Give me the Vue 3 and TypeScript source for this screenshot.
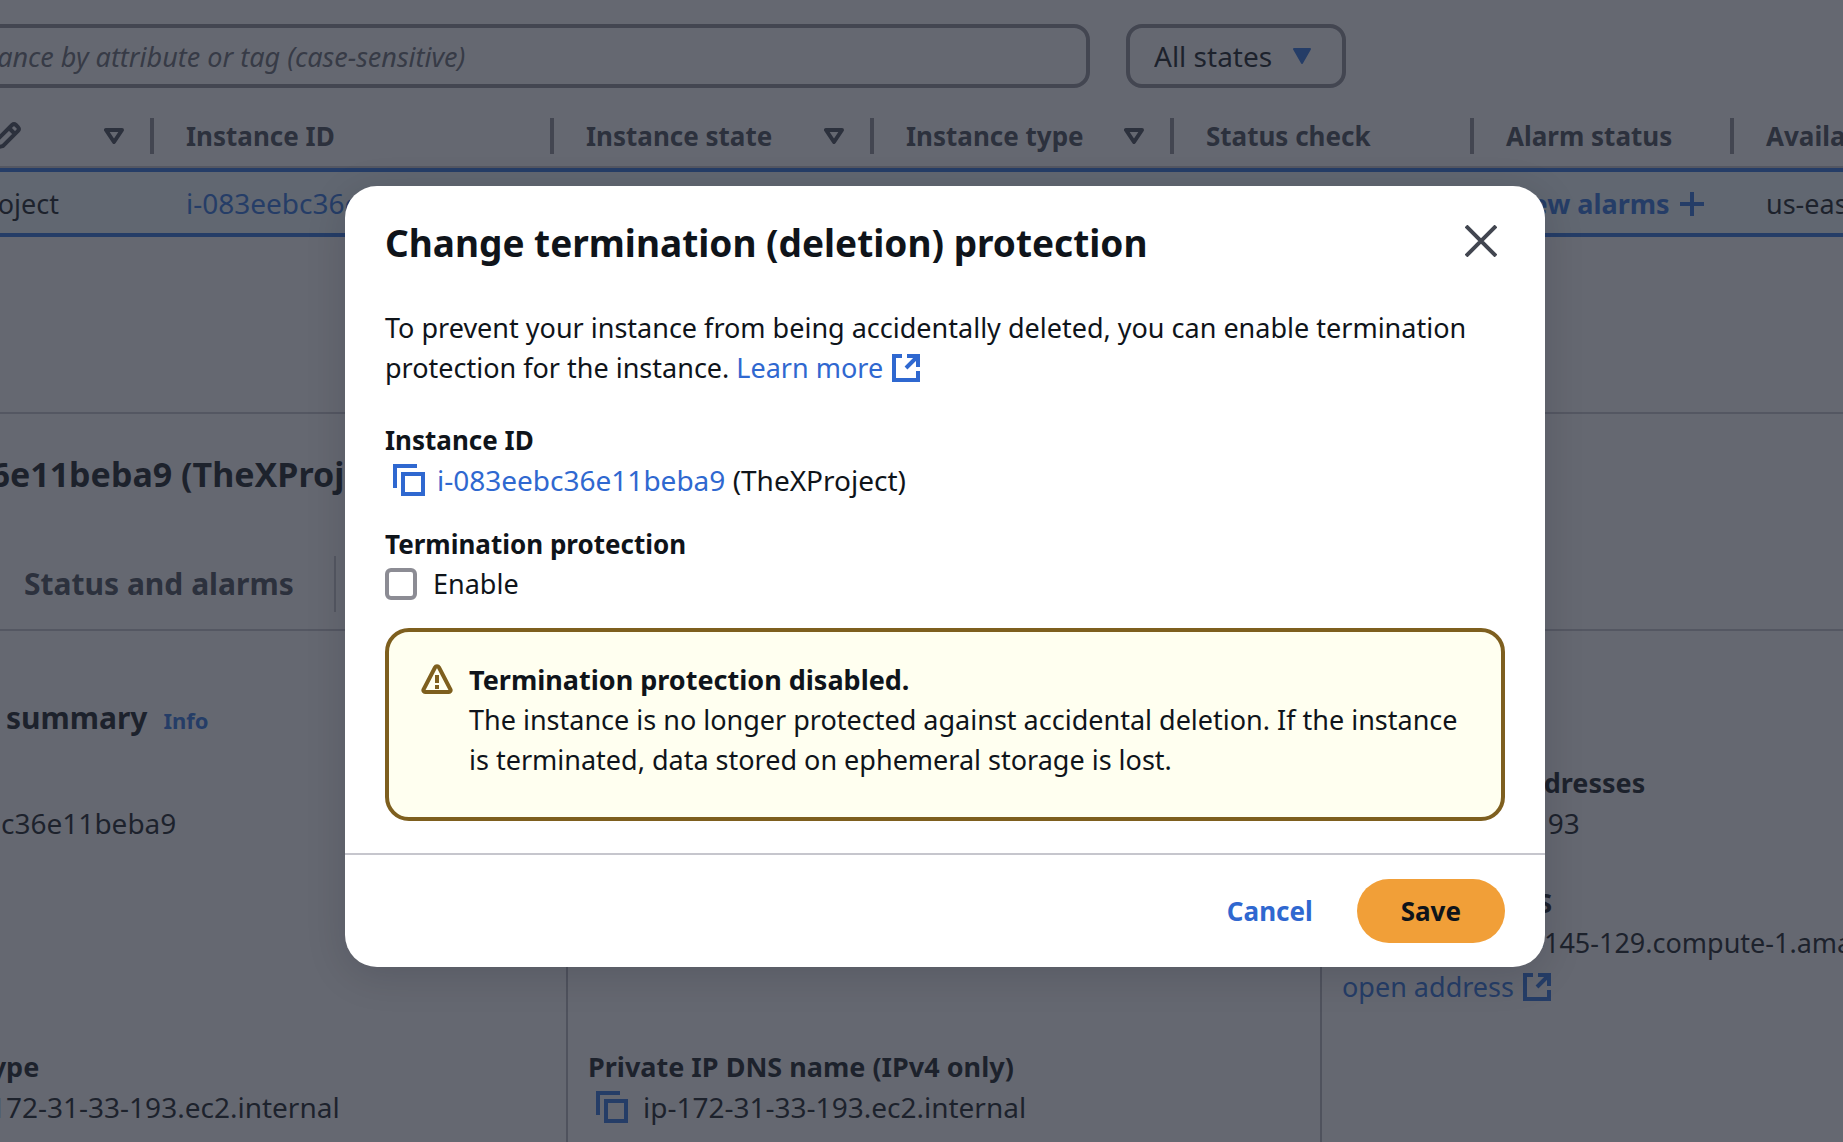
<script setup lang="ts">
import { ref } from 'vue'

interface Column {
  label: string
  width: string
  sortable?: boolean
  editable?: boolean
}

const columns: Column[] = [
  { label: 'Name', width: '354px', sortable: true, editable: true },
  { label: 'Instance ID', width: '400px' },
  { label: 'Instance state', width: '320px', sortable: true },
  { label: 'Instance type', width: '300px', sortable: true },
  { label: 'Status check', width: '300px' },
  { label: 'Alarm status', width: '260px' },
  { label: 'Availability Zone', width: 'auto' },
]

const stateFilter = ref('All states')
const query = ref('')
const protectionEnabled = ref(false)
</script>

<template>
  <div class="viewport">
    <div class="console">
      <div class="filters">
        <input
          v-model="query"
          class="search"
          type="text"
          aria-label="Find instances"
          placeholder="Find Instance by attribute or tag (case-sensitive)"
        />
        <div class="state-filter">
          <select v-model="stateFilter" aria-label="Instance state filter">
            <option>All states</option>
            <option>Running</option>
          </select>
          <svg class="caret" viewBox="0 0 20 16" aria-hidden="true">
            <path d="M2 1h16L10 15z" fill="currentColor" stroke="currentColor" stroke-width="2" stroke-linejoin="round" />
          </svg>
        </div>
      </div>

      <table class="instances">
        <colgroup>
          <col v-for="c in columns" :key="c.label" :style="{ width: c.width }" />
        </colgroup>
        <thead>
          <tr>
            <th v-for="c in columns" :key="c.label" scope="col">
              <div class="head">
                <span>{{ c.label }}</span>
                <svg v-if="c.editable" class="pencil" viewBox="0 0 32 32" aria-hidden="true">
                  <path d="M4 28l2-8L21 5a3 3 0 0 1 4 0l2 2a3 3 0 0 1 0 4L12 26zM18 8l6 6" />
                </svg>
                <svg v-if="c.sortable" class="sort" viewBox="0 0 20 16" aria-hidden="true">
                  <path d="M2 2h16L10 14z" />
                </svg>
              </div>
            </th>
          </tr>
        </thead>
        <tbody>
          <tr>
            <td class="name">TheXProject</td>
            <td><a href="#" class="ident">i-083eebc36e11beba9</a></td>
            <td>
              <div class="state">
                <span>Running</span>
                <svg v-for="n in 2" :key="n" viewBox="0 0 32 32" aria-hidden="true">
                  <circle cx="13" cy="13" r="11" />
                  <path d="M21 21l9 9" />
                </svg>
              </div>
            </td>
            <td>t2.micro</td>
            <td>Initializing</td>
            <td>
              <a href="#" class="alarms">
                View alarms
                <svg viewBox="0 0 24 24" aria-hidden="true"><path d="M12 0v24M0 12h24" /></svg>
              </a>
            </td>
            <td>us-east-1d</td>
          </tr>
        </tbody>
      </table>

      <section class="details">
        <h2>i-083eebc36e11beba9 (TheXProject)</h2>
        <nav class="tabs">
          <a href="#">Details</a>
          <a href="#">Status and alarms</a>
          <a href="#">Monitoring</a>
        </nav>
        <div class="summary-head">
          <h3>Instance summary</h3>
          <a href="#">Info</a>
        </div>
        <div class="facts">
          <dl>
            <dt>Instance ID</dt>
            <dd><svg class="copy" viewBox="0 0 32 32"><path d="M2 24V2h22M10 10h20v20H10z" /></svg>i-083eebc36e11beba9</dd>
          </dl>
          <dl></dl>
          <dl>
            <dt>Private IPv4 addresses</dt>
            <dd><svg class="copy" viewBox="0 0 32 32"><path d="M2 24V2h22M10 10h20v20H10z" /></svg>172.31.33.193</dd>
          </dl>
          <dl></dl>
          <dl></dl>
          <dl>
            <dt>Public IPv4 DNS</dt>
            <dd class="host"><svg class="copy" viewBox="0 0 32 32"><path d="M2 24V2h22M10 10h20v20H10z" /></svg>ec2-54-242-145-129.compute-1.amazonaws.com</dd>
            <dd class="open">
              <a href="#">open address
                <svg class="external" viewBox="0 0 28 28"><path d="M10 2H2v24h24v-9M15 2h11v11M26 2L14 14" /></svg>
              </a>
            </dd>
          </dl>
          <dl>
            <dt>Hostname type</dt>
            <dd>IP name: ip-172-31-33-193.ec2.internal</dd>
          </dl>
          <dl>
            <dt>Private IP DNS name (IPv4 only)</dt>
            <dd><svg class="copy" viewBox="0 0 32 32"><path d="M2 24V2h22M10 10h20v20H10z" /></svg>ip-172-31-33-193.ec2.internal</dd>
          </dl>
          <dl></dl>
        </div>
      </section>
    </div>

    <div class="overlay">
      <div class="modal" role="dialog" aria-modal="true" aria-labelledby="modal-title">
        <header>
          <h1 id="modal-title">Change termination (deletion) protection</h1>
          <button class="close" type="button" aria-label="Close">
            <svg viewBox="0 0 32 32"><path d="M1 1l30 30M31 1L1 31" /></svg>
          </button>
        </header>
        <div class="content">
          <p>
            To prevent your instance from being accidentally deleted, you can enable termination
            protection for the instance.
            <a href="#">Learn more
              <svg class="external" viewBox="0 0 28 28"><path d="M10 2H2v24h24v-9M15 2h11v11M26 2L14 14" /></svg>
            </a>
          </p>
          <div class="field">
            <strong>Instance ID</strong>
            <div class="copyable">
              <svg class="copy" viewBox="0 0 32 32"><path d="M2 24V2h22M10 10h20v20H10z" /></svg>
              <span class="ident"><a href="#">i-083eebc36e11beba9</a> (TheXProject)</span>
            </div>
          </div>
          <div class="field">
            <strong>Termination protection</strong>
            <label class="check"><input v-model="protectionEnabled" type="checkbox" />Enable</label>
          </div>
          <div class="alert" role="alert">
            <svg class="warning" viewBox="0 0 32 32" aria-hidden="true">
              <path d="M14 4.500a2.300 2.300 0 0 1 4 0l11.500 22a1.800 1.800 0 0 1-1.600 2.500H4.100a1.800 1.800 0 0 1-1.600-2.500z" />
              <path d="M16 12v8M16 22v4" />
            </svg>
            <div>
              <strong>Termination protection disabled.</strong>
              <p>The instance is no longer protected against accidental deletion. If the instance is terminated, data stored on ephemeral storage is lost.</p>
            </div>
          </div>
        </div>
        <footer>
          <button class="cancel" type="button">Cancel</button>
          <button class="save" type="button">Save</button>
        </footer>
      </div>
    </div>
  </div>
</template>

<style>
body {
  margin: 0;
  background: #fff;
}
</style>

<style scoped>
.viewport {
  position: relative;
  height: 100vh;
  overflow: hidden;
  font-family: 'Noto Sans', 'Open Sans', sans-serif;
  font-size: 27px;
  line-height: 40px;
  color: #0f141a;
}

* {
  box-sizing: border-box;
}

a {
  color: #2f68d0;
  text-decoration: none;
}

strong,
dt {
  display: block;
  font-size: 26px;
  font-weight: 700;
}

dt,
.alert strong {
  font-size: 27px;
}

.ident {
  font-size: 28px;
}

svg {
  flex: none;
  fill: none;
  stroke: currentColor;
  stroke-width: 4;
}

.console {
  --link: #2b70dc;
  margin-left: -200px;
}

.console a {
  color: var(--link);
}

.filters {
  display: flex;
  gap: 36px;
  padding-top: 24px;
}

.search {
  width: 1290px;
  height: 64px;
  padding: 0 24px 0 90px;
  border: 4px solid #8c8c94;
  border-radius: 16px;
  font: italic 27px 'Noto Sans', sans-serif;
  background: transparent;
}

.search::placeholder {
  color: #656871;
  opacity: 1;
}

.state-filter {
  display: grid;
  align-items: center;
  width: 220px;
}

.state-filter > * {
  grid-area: 1 / 1;
}

.state-filter select {
  width: 100%;
  height: 64px;
  padding: 0 24px;
  border: 4px solid #8c8c94;
  border-radius: 16px;
  appearance: none;
  background: transparent;
  font: 28px 'Noto Sans', sans-serif;
  color: #0f141a;
}

.caret {
  justify-self: end;
  width: 20px;
  height: 16px;
  margin-right: 34px;
  color: var(--link);
}

.instances {
  width: 100%;
  margin-top: 18px;
  border-collapse: separate;
  border-spacing: 0;
  table-layout: fixed;
}

.instances th {
  height: 62px;
  padding: 0;
  border-bottom: 2px solid #c6c6cd;
  text-align: left;
  font-size: 26px;
  color: #424650;
  white-space: nowrap;
}

.head {
  display: flex;
  align-items: center;
  justify-content: space-between;
  height: 36px;
  padding: 0 26px 0 32px;
  border-right: 4px solid #8c8c94;
}

th:last-child .head {
  border-right: 0;
}

.pencil {
  width: 32px;
  height: 32px;
}

.sort {
  width: 20px;
  height: 16px;
  stroke-linejoin: round;
}

.instances td {
  height: 69px;
  padding: 2px 0 0 32px;
  border: solid var(--link);
  border-width: 4px 0;
  background: #f0fbff;
  white-space: nowrap;
}

.instances .name {
  padding-left: 108px;
}

.state,
.alarms {
  display: flex;
  align-items: center;
}

.state {
  gap: 16px;
}

.state svg {
  width: 32px;
  height: 32px;
  color: var(--link);
}

.alarms {
  gap: 10px;
  font-weight: 700;
}

.alarms svg {
  width: 24px;
  height: 24px;
}

.details {
  margin-top: 175px;
  border-top: 2px solid #c6c6cd;
}

h1,
h2,
h3,
p,
dl,
dd {
  margin: 0;
}

.details h2 {
  padding: 38px 0 0 12px;
  font-size: 34px;
  line-height: 44px;
  white-space: nowrap;
}

.tabs {
  display: flex;
  margin-top: 60px;
  padding: 0 0 17px 36px;
  border-bottom: 2px solid #c6c6cd;
}

.tabs a {
  padding: 0 40px;
  border-right: 2px solid #c6c6cd;
  font-size: 30px;
  font-weight: 700;
  line-height: 56px;
  color: #424650;
}

.tabs a:first-child {
  width: 148px;
  padding: 0 0 0 20px;
}

.tabs a:last-child {
  border-right: 0;
}

.summary-head {
  display: flex;
  align-items: baseline;
  gap: 16px;
  padding: 65px 0 23px 68px;
}

.summary-head h3 {
  font-size: 30px;
  line-height: 44px;
}

.summary-head a {
  font-size: 22px;
  font-weight: 700;
}

.facts {
  display: grid;
  grid-template-columns: 733fr 754fr 523fr;
  margin-left: 33px;
}

.facts dl {
  min-width: 0;
  padding-bottom: 40px;
  white-space: nowrap;
}

.facts dl:not(:nth-child(3n + 1)) {
  padding-left: 20px;
  border-left: 2px solid #b4b4bb;
}

.facts dd {
  display: flex;
  align-items: center;
  font-size: 28px;
}

.facts .host,
.facts .open {
  font-size: 27px;
}

.facts .open {
  height: 44px;
  align-items: flex-end;
}

.copy {
  width: 32px;
  height: 32px;
  margin: 0 12px 0 8px;
  color: #2f68d0;
}

.console .copy {
  margin-right: 15px;
  color: var(--link);
}

.external {
  width: 28px;
  height: 28px;
  margin-left: 2px;
  vertical-align: -4px;
}

.overlay {
  position: absolute;
  inset: 0;
  display: flex;
  justify-content: center;
  align-items: flex-start;
  padding: 186px 0 0 47px;
  background: rgba(36, 40, 52, 0.7);
}

.modal {
  width: 1200px;
  border-radius: 32px;
  background: #fff;
  box-shadow: 0 8px 40px rgba(0, 7, 22, 0.14);
}

.modal header {
  display: flex;
  align-items: flex-start;
  justify-content: space-between;
  padding: 33px 48px 0 40px;
}

.modal h1 {
  font-size: 37px;
  line-height: 48px;
}

.close {
  display: flex;
  padding: 6px 0 0;
  border: 0;
  background: none;
  color: #424650;
}

.close svg {
  width: 32px;
  height: 32px;
}

.content {
  padding: 41px 40px 32px;
}

.field {
  margin-top: 24px;
}

p + .field {
  margin-top: 32px;
}

.copyable,
.check {
  display: flex;
  align-items: center;
  height: 40px;
}

.check input {
  width: 32px;
  height: 32px;
  margin: 0 16px 0 0;
  border: 4px solid #8c8c94;
  border-radius: 6px;
  appearance: none;
}

.alert {
  display: flex;
  gap: 16px;
  margin-top: 24px;
  padding: 28px 32px 37px;
  border: 4px solid #7e5f1e;
  border-radius: 24px;
  background: #fffff0;
}

.warning {
  width: 32px;
  height: 32px;
  margin-top: 3px;
  color: #7e5f1e;
}

.modal footer {
  display: flex;
  justify-content: flex-end;
  padding: 24px 40px;
  border-top: 2px solid #c6c6cd;
}

.modal footer button {
  height: 64px;
  padding: 0 44px;
  border: 0;
  border-radius: 32px;
  background: none;
  font: 700 26px 'Noto Sans', sans-serif;
  color: #2f68d0;
}

.modal footer .save {
  background: #f19f38;
  color: #0f141a;
}
</style>
